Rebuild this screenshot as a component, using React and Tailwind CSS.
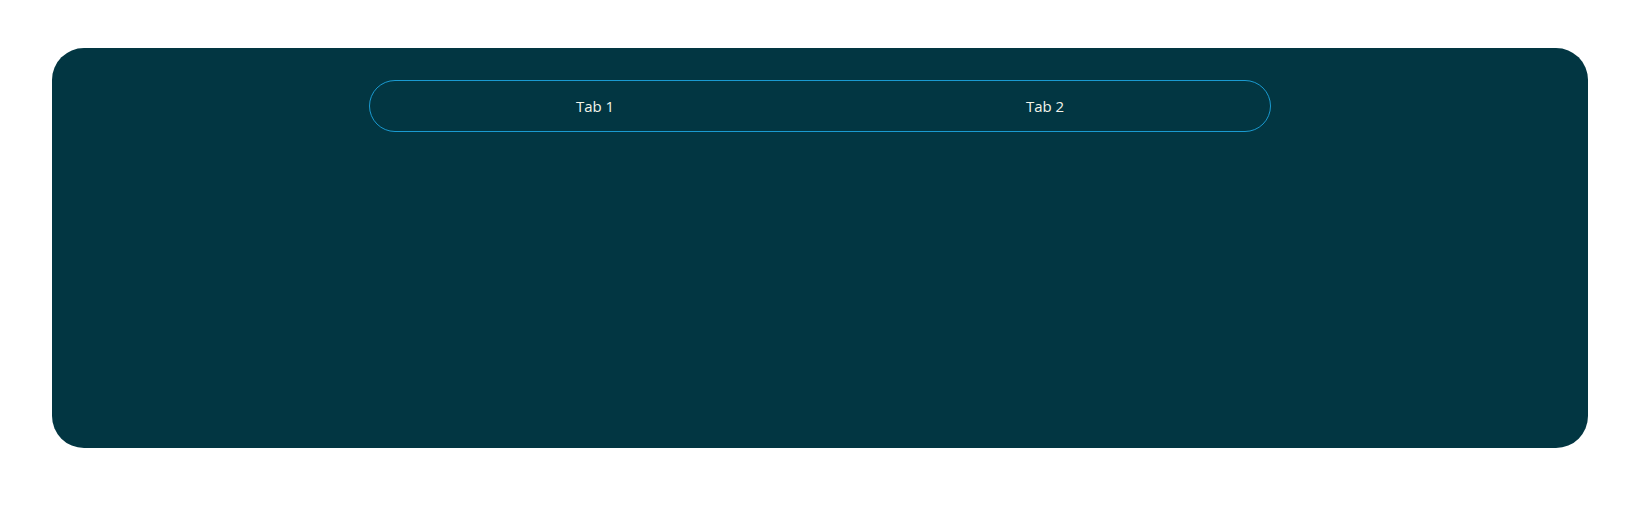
export default function App() {
  return (
    <div className="w-full min-h-[509px] bg-white px-[52px] pt-12" style={{ fontFamily: '"Open Sans", "Noto Sans", sans-serif' }}>
      <div className="h-[400px] rounded-[32px] bg-[#023642] pt-8">
        <div className="mx-auto flex h-[52px] w-[902px] items-center rounded-full border border-[#1a9ad0]">
          <button className="flex-1 text-center text-[15px] text-[#f2f4ea]">Tab 1</button>
          <button className="flex-1 text-center text-[15px] text-[#f2f4ea]">Tab 2</button>
        </div>
      </div>
    </div>
  );
}
